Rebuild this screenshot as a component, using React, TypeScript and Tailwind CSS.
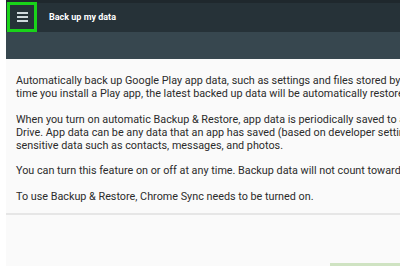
import React from 'react';

const paragraphs: string[][] = [
  [
    'Automatically back up Google Play app data, such as settings and files stored by apps. The next',
    'time you install a Play app, the latest backed up data will be automatically restored.',
  ],
  [
    'When you turn on automatic Backup & Restore, app data is periodically saved to a folder in your Google',
    'Drive. App data can be any data that an app has saved (based on developer settings), potentially including',
    'sensitive data such as contacts, messages, and photos.',
  ],
  ['You can turn this feature on or off at any time. Backup data will not count towards your Drive storage quota.'],
  ['To use Backup & Restore, Chrome Sync needs to be turned on.'],
];

const App: React.FC = () => {
  return (
    <div className="w-[400px] h-[266px] overflow-hidden flex bg-white" style={{ fontFamily: 'Roboto, "Noto Sans", sans-serif' }}>
      <div className="w-[6px] shrink-0 bg-white" />
      <div className="flex-1 min-w-0 flex flex-col bg-[#fafafa]">
        <div className="h-[3px] bg-[#1f282d]" />
        <div className="h-[29px] bg-[#263238] flex items-center">
          <div className="ml-[1px] w-[30px] h-[30px] -mt-[1px] border-[3px] border-[#19d319] flex flex-col items-center justify-center gap-[2px]">
            <span className="block w-[11px] h-[2px] bg-[#cfd8dc]" />
            <span className="block w-[11px] h-[2px] bg-[#cfd8dc]" />
            <span className="block w-[11px] h-[2px] bg-[#cfd8dc]" />
          </div>
          <span className="ml-[12px] text-[9px] font-bold text-white">Back up my data</span>
        </div>
        <div className="h-[27px] bg-[#37474f]" />
        <div className="pl-[10px] pt-[15px] flex flex-col gap-[12.5px] text-[10.8px] leading-[13px] text-[#2b2b2b] overflow-hidden">
          {paragraphs.map((lines, i) => (
            <div key={i}>
              {lines.map((line, j) => (
                <div key={j} className="whitespace-nowrap">{line}</div>
              ))}
            </div>
          ))}
        </div>
        <div className="mt-[10px] h-[2px] bg-[#e6e6e6]" />
        <div className="flex-1 flex items-end justify-end">
          <div className="w-[70px] h-[3px] bg-[#cfe3c2]" />
        </div>
      </div>
    </div>
  );
};

export default App;
